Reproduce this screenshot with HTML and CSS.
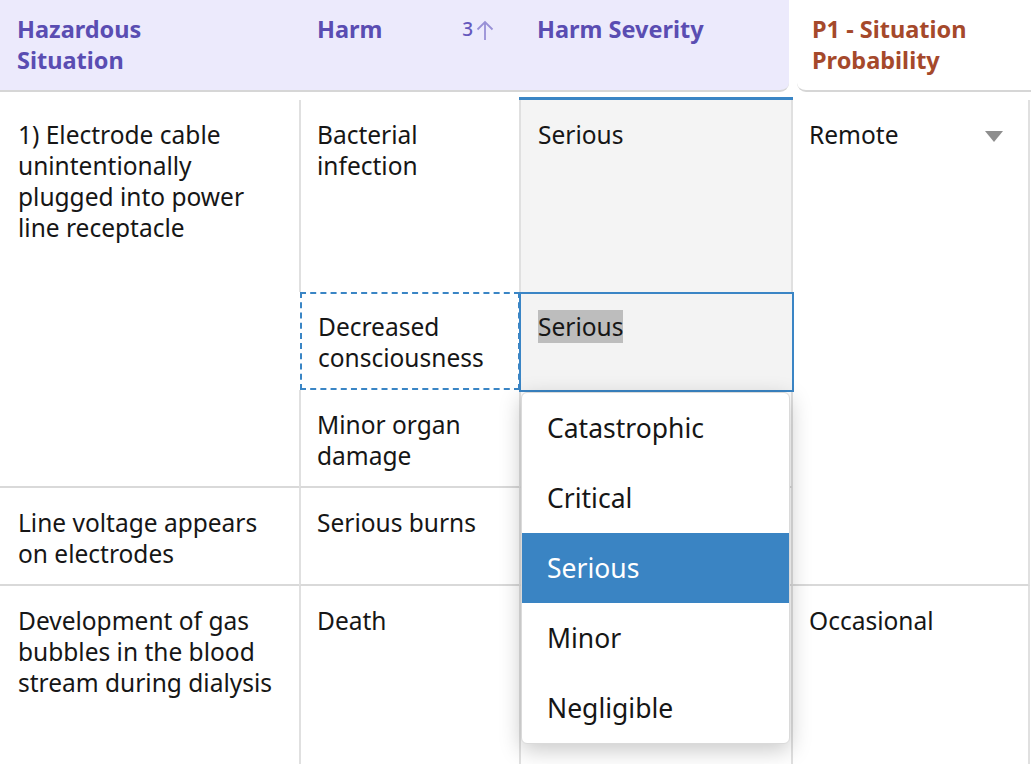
FILE: index.html
```html
<!DOCTYPE html>
<html>
<head>
<meta charset="utf-8">
<link rel="stylesheet" href="styles.css">
</head>
<body>
<div class="table">
  <div class="thead">
    <div class="thead-main">
      <div class="th th-hazard">Hazardous<br>Situation</div>
      <div class="th th-harm">
        <span>Harm</span>
        <span class="sort"><span class="sort-num">3</span><svg class="sort-arrow" width="20" height="22" viewBox="0 0 20 22"><path d="M10 3 V21 M2.5 10.5 L10 3 L17.5 10.5" fill="none" stroke="#9890d6" stroke-width="1.8"/></svg></span>
      </div>
      <div class="th th-sev">Harm Severity</div>
    </div>
    <div class="thead-side">
      <div class="th th-p1">P1 - Situation<br>Probability</div>
    </div>
  </div>

  <div class="tbody">
    <div class="cell c-hazard r1">1) Electrode cable unintentionally plugged into power line receptacle</div>
    <div class="cell c-harm">Bacterial infection</div>
    <div class="cell c-sev sev-active">Serious</div>
    <div class="cell c-prob r1p">
      <span>Remote</span>
      <svg class="caret" width="18" height="11" viewBox="0 0 18 11"><path d="M0 0 H18 L9 11 Z" fill="#8e8e8e"/></svg>
    </div>

    <div class="cell c-harm harm-focus">Decreased consciousness</div>
    <div class="cell c-sev sev-edit">
      <span class="sel">Serious</span>
      <ul class="menu">
        <li>Catastrophic</li>
        <li>Critical</li>
        <li class="hl">Serious</li>
        <li>Minor</li>
        <li>Negligible</li>
      </ul>
    </div>

    <div class="cell c-harm bb">Minor organ damage</div>
    <div class="cell c-sev bb"></div>

    <div class="cell c-hazard bb">Line voltage appears on electrodes</div>
    <div class="cell c-harm bb">Serious burns</div>
    <div class="cell c-sev bb"></div>

    <div class="cell c-hazard">Development of gas bubbles in the blood stream during dialysis</div>
    <div class="cell c-harm">Death</div>
    <div class="cell c-sev"></div>
    <div class="cell c-prob">Occasional</div>
  </div>
</div>
</body>
</html>
```

FILE: styles.css
```css
html, body {
  margin: 0;
  padding: 0;
  background: #ffffff;
  overflow: hidden;
}
body {
  font-family: "Noto Sans", "Open Sans", sans-serif;
  font-size: 24.5px;
  line-height: 31px;
  color: #161616;
  width: 1031px;
  height: 764px;
}
.table {
  width: 1031px;
}
.thead {
  display: flex;
  height: 92px;
}
.thead-main {
  display: flex;
  width: 789px;
  background: #eceafc;
  border-bottom: 2px solid #d6d6d6;
  border-bottom-right-radius: 9px;
  box-sizing: border-box;
}
.thead-side {
  flex: 1;
  margin-left: 8px;
  background: #ffffff;
  border-bottom: 2px solid #d6d6d6;
  border-bottom-left-radius: 9px;
  box-sizing: border-box;
}
.th {
  font-size: 23.5px;
  font-weight: 700;
  color: #5a4db2;
  padding: 14px 18px 0 17px;
  box-sizing: border-box;
}
.th-hazard { width: 300px; }
.th-harm {
  width: 220px;
  display: flex;
  justify-content: space-between;
  padding-right: 25px;
}
.sort {
  display: flex;
  align-items: center;
  height: 31px;
  font-weight: 500;
  font-size: 19px;
  color: #6558bd;
}
.sort-num { margin-right: 2px; }
.sort-arrow { display: block; }
.th-sev { width: 269px; }
.th-p1 {
  color: #a5492b;
  padding-left: 15px;
}

.tbody {
  display: grid;
  grid-template-columns: 300px 220px 272px 1fr;
  grid-template-rows: 192px 98px 98px 98px 186px;
  padding-top: 8px;
}
.cell {
  padding: 19px 16px 0 16px;
  box-sizing: border-box;
  position: relative;
}
.c-hazard { grid-column: 1; padding-left: 18px; }
.c-hazard.r1 { grid-row: 1 / span 3; border-bottom: 2px solid #d9d9d9; }
.c-harm {
  grid-column: 2;
  border-left: 2px solid #e0e0e0;
  margin-left: -1px;
}
.c-sev {
  grid-column: 3;
  border-left: 2px solid #e0e0e0;
  margin-left: -1px;
}
.c-prob {
  grid-column: 4;
  border-left: 2px solid #e0e0e0;
  border-right: 2px solid #e0e0e0;
  margin-left: -1px;
  margin-right: 1px;
}
.c-prob.r1p {
  grid-row: 1 / span 4;
  border-bottom: 2px solid #d9d9d9;
  display: flex;
  justify-content: space-between;
  align-items: flex-start;
  padding-right: 25px;
}
.caret { margin-top: 12px; }
.bb { border-bottom: 2px solid #d9d9d9; }

.sev-active {
  background: #f4f4f4;
  border-right: 2px solid #e0e0e0;
  box-shadow: 0 -3px 0 #3a85c5;
  margin-right: -1px;
  padding-left: 17px;
}
.harm-focus {
  border-left: none;
  outline: 2px dashed #3a85c5;
  outline-offset: -2px;
  padding-left: 18px;
  margin-left: 0;
}
.sev-edit {
  background: #f3f3f3;
  border: 2px solid #3a85c5;
  margin-left: -1px;
  margin-right: -2px;
  margin-bottom: -2px;
  padding-left: 17px;
  padding-top: 17px;
  z-index: 2;
}
.sel {
  background: #bdbdbd;
}
.menu {
  position: absolute;
  top: 100%;
  left: 0;
  width: 269px;
  margin: 2px 0 0 0;
  padding: 0;
  list-style: none;
  background: #ffffff;
  border: 1px solid #dadada;
  border-radius: 6px;
  box-shadow: 0 6px 22px rgba(0, 0, 0, 0.22);
  overflow: hidden;
  box-sizing: border-box;
  font-size: 26.5px;
}
.menu li {
  height: 70px;
  line-height: 70px;
  padding-left: 25px;
}
.menu li.hl {
  background: #3a84c3;
  color: #ffffff;
}
```
